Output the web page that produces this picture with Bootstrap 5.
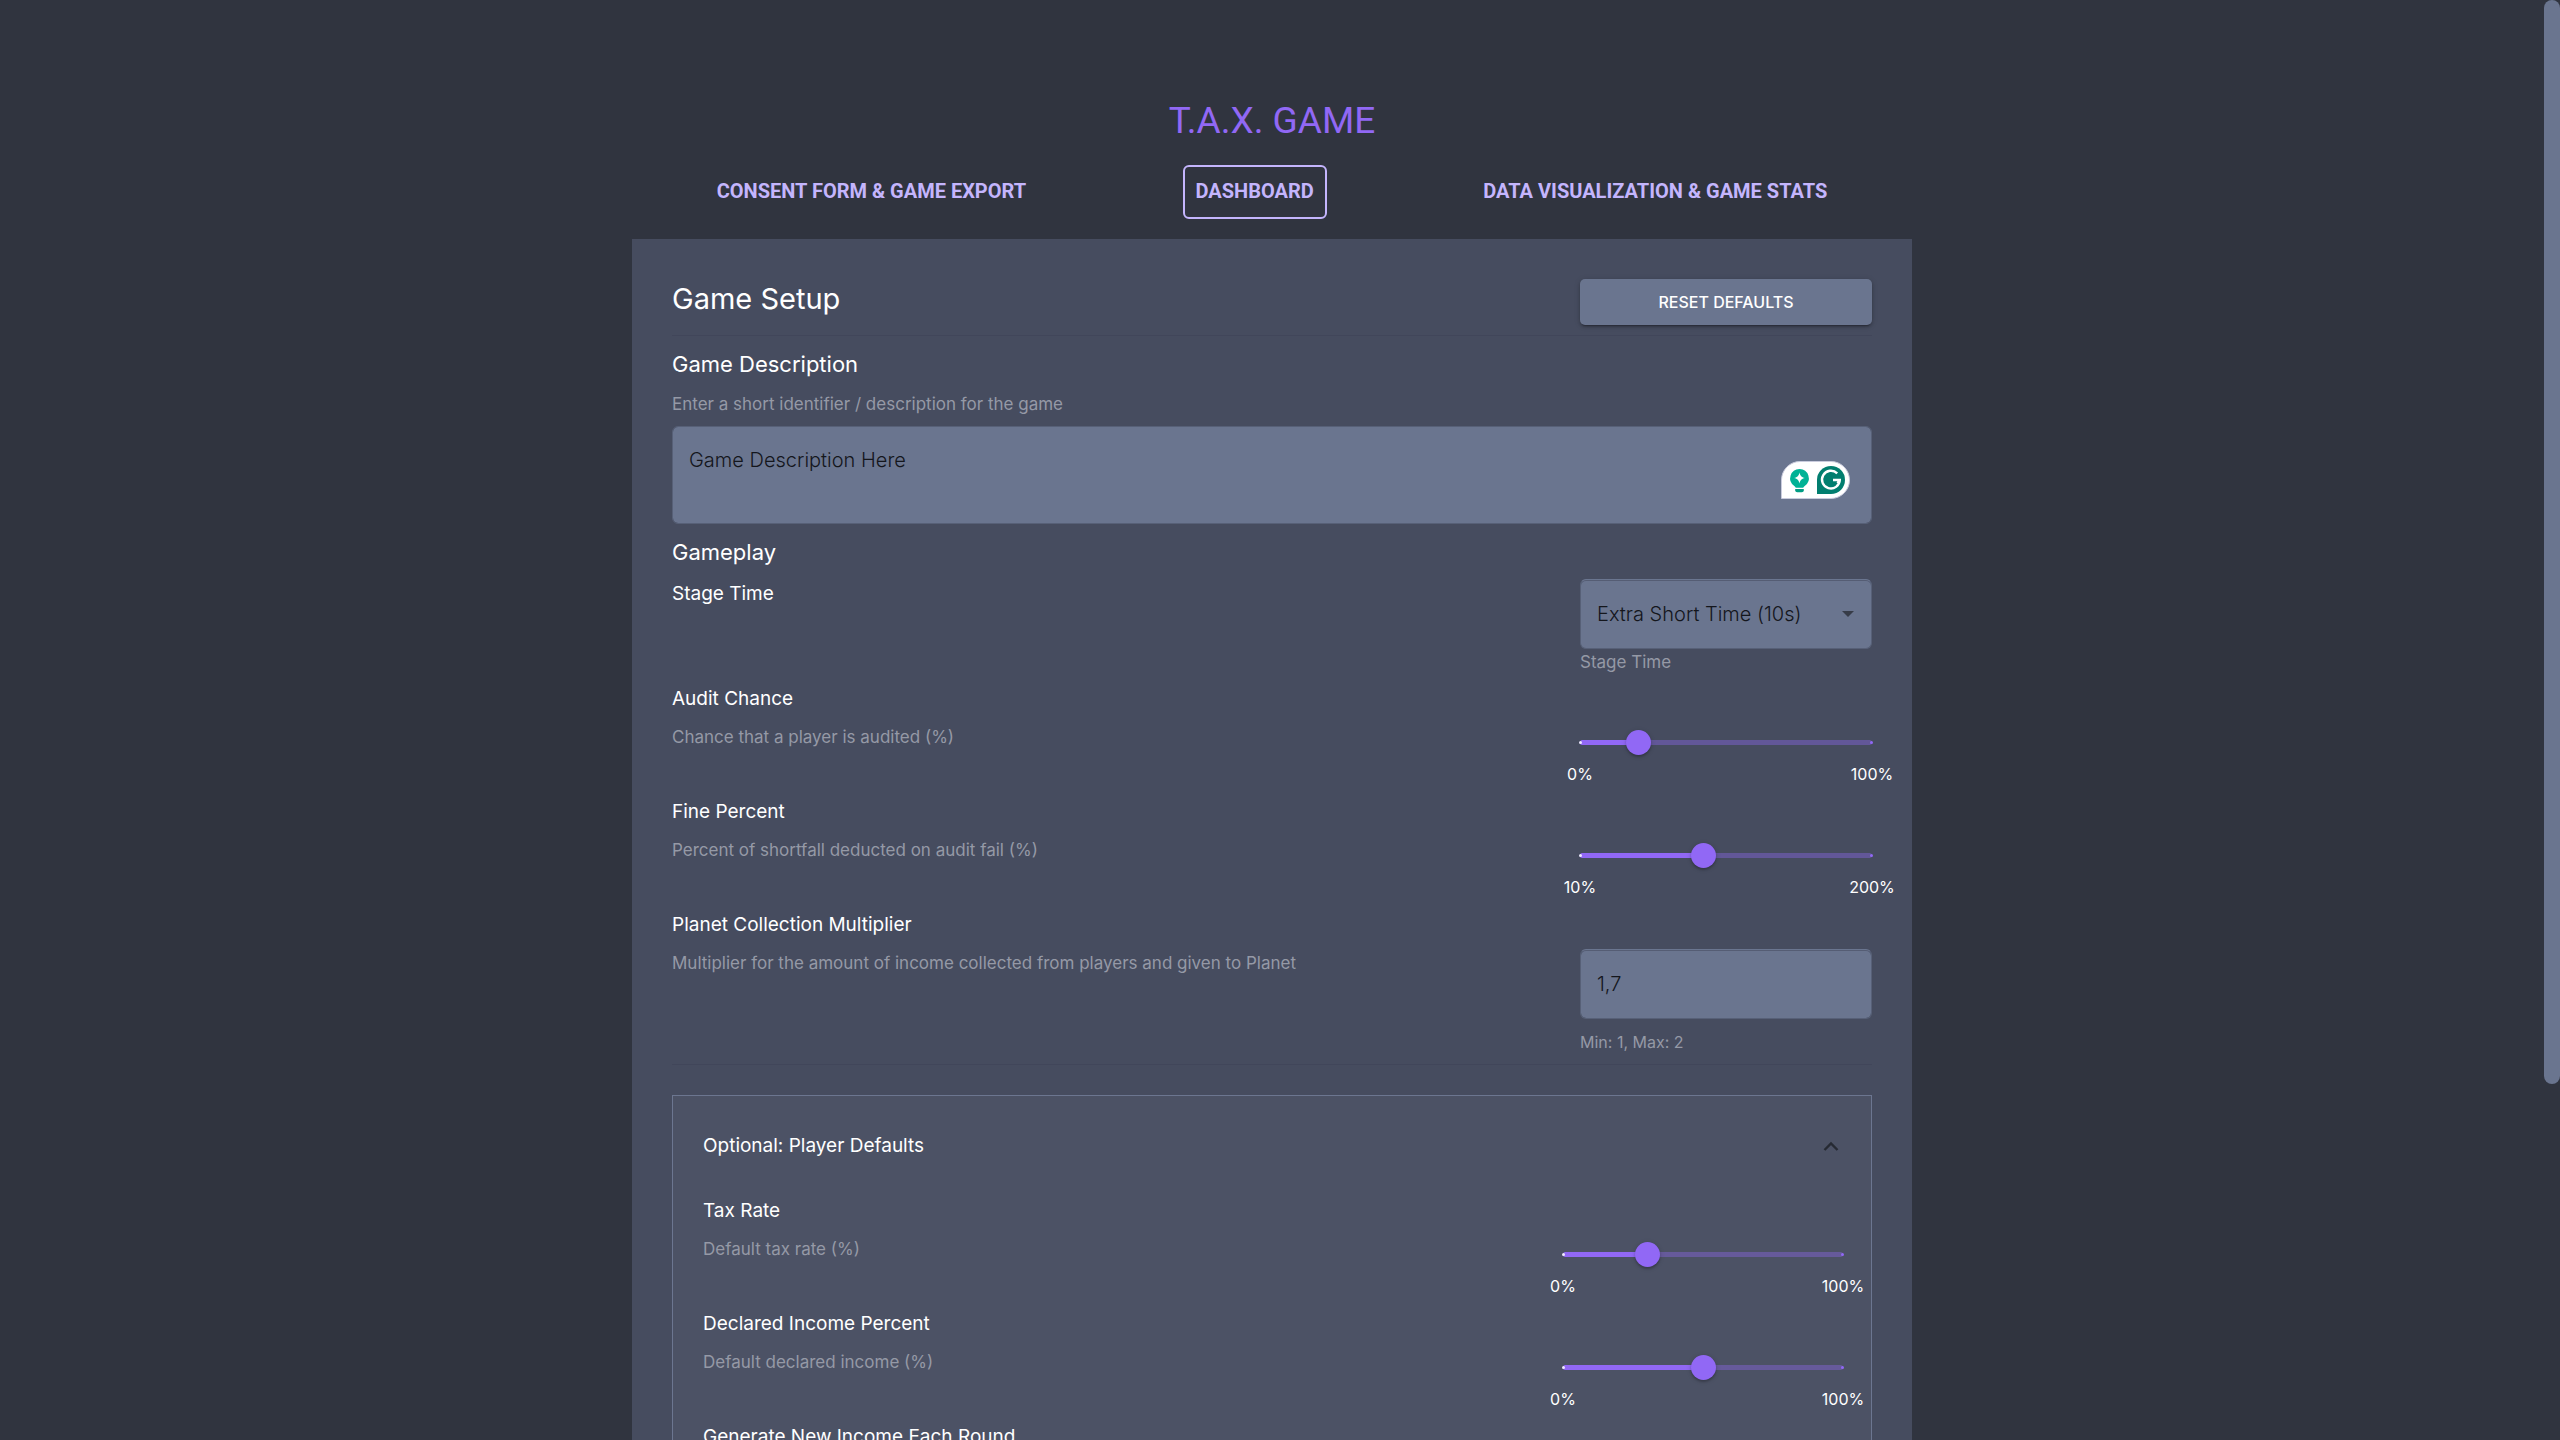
<!DOCTYPE html>
<html lang="en">
<head>
<meta charset="utf-8">
<meta name="viewport" content="width=device-width, initial-scale=1">
<title>T.A.X. Game</title>
<link href="https://cdn.jsdelivr.net/npm/bootstrap@5.3.0/dist/css/bootstrap.min.css" rel="stylesheet">
<style>
:root {
  --page: #30343f;
  --panel: #464c5f;
  --panel-inner: #4c5265;
  --field: #6a758f;
  --field-edge: #576077;
  --accent: #9168f5;
  --accent-light: #c4b5fd;
  --muted: #9599a6;
}
body { background: var(--page); color: #fff; font-family: Inter, "Noto Sans", sans-serif; }
.page-scroll { scrollbar-width: none; padding: 99px 16px 0 0; }
.page-wrap { max-width: 1280px; }
.site-title { font: 400 37px/44px Roboto, sans-serif; color: var(--accent); margin-bottom: 22px; }
.site-nav { font: 700 20px/30px Roboto, sans-serif; margin-bottom: 20px; }
.site-nav a { color: var(--accent-light); text-decoration: none; border: 2px solid transparent; border-radius: 6px; padding: 9px 11px 11px; }
.site-nav a.active { border-color: var(--accent-light); }

.setup-panel { background: var(--panel); padding: 40px; min-height: 1640px; }
.setup-head { border-bottom: 1px solid #41465a; padding-bottom: 10px; margin-bottom: 13px; }
.setup-head h1 { font-size: 29px; line-height: 40px; font-weight: 400; }
.control-col { flex: 0 0 292px; }
.btn-reset { --bs-btn-color: #fff; --bs-btn-bg: var(--field); --bs-btn-hover-bg: #5b6680; --bs-btn-hover-color: #fff;
  height: 46px; border: 0; border-radius: 5px; font-size: 16px; font-weight: 500;
  box-shadow: 0 3px 1px -2px rgba(0,0,0,.2), 0 2px 3px rgba(0,0,0,.2), 0 1px 6px rgba(0,0,0,.14); }

.group-title { font-size: 22px; line-height: 30px; font-weight: 400; margin-bottom: 12px; }
.setting-title { display: block; font-size: 19px; line-height: 30px; font-weight: 400; margin: 0; }
.setting-help { font-size: 17px; line-height: 26px; color: var(--muted); margin: 10px 0 0; }
.group-help { margin: 0 0 9px; }

.field { background-color: var(--field); border: 1px solid var(--field-edge); border-radius: 6px; color: #14161c;
  font-size: 20px; font-weight: 300; line-height: 30px; padding: 0 16px; }
.field:focus { background-color: var(--field); color: #14161c; border-color: var(--accent); box-shadow: none; }
textarea.field { height: 98px; padding: 18px 16px; resize: none; }
.field-tall { height: 70px; border-top-color: var(--field); box-shadow: inset 0 1px 0 #555d74; }
select.field { background-image: url("data:image/svg+xml,%3Csvg xmlns='http://www.w3.org/2000/svg' viewBox='0 0 12 6'%3E%3Cpath fill='%23373c48' d='M0 0h12L6 6z'/%3E%3C/svg%3E");
  background-size: 12px 6px; background-position: right 17px center; }
.desc-box { margin-bottom: 13px; }
.assist { position: absolute; right: 22px; bottom: 25px; width: 69px; height: 38px; }

.row-stage { min-height: 105px; }
.row-slider { min-height: 113px; }
.row-slider .control-col { padding-top: 45px; }
.row-multiplier { min-height: 155px; border-bottom: 1px solid #41465a; margin-bottom: 30px; }
.row-multiplier .control-col { padding-top: 39px; }
.limit-note { font-size: 16px; line-height: 24px; color: var(--muted); margin: 11px 0 0; }

.slide { position: relative; height: 26px; margin-bottom: 7px; }
.slide::before, .slide::after { content: ""; position: absolute; left: 0; top: 11px; height: 5px; border-radius: 3px; background: var(--accent); }
.slide::before { width: 100%; opacity: .38; }
.slide::after { width: var(--fill); }
.slide i { position: absolute; z-index: 1; top: 12px; width: 3px; height: 3px; border-radius: 50%; }
.slide i.lo { left: -1px; background: #efe9ff; }
.slide i.hi { right: -1px; background: var(--accent); }
.slide input { position: absolute; z-index: 2; left: -12px; width: calc(100% + 24px); height: 26px; padding: 0; margin: 0; }
.slide input::-webkit-slider-runnable-track { height: 26px; background: transparent; }
.slide input::-webkit-slider-thumb { width: 25px; height: 25px; margin-top: 1px; background: var(--accent);
  box-shadow: 0 2px 2px rgba(0,0,0,.16), 0 1px 5px rgba(0,0,0,.18); }
.ends { font-size: 16px; line-height: 24px; }
.ends span { width: 0; display: flex; justify-content: center; white-space: nowrap; }

.defaults { background: var(--panel-inner); border: 1px solid #6c7690; padding: 35px 28px 35px 30px; min-height: 720px; }
.defaults-toggle { background: none; border: 0; color: #fff; padding: 0; margin-bottom: 35px; }
.defaults .control-col { flex-basis: 280px; }
.scroll-thumb { position: fixed; top: 0; right: 0; width: 16px; height: 75.3vh; border-radius: 8px; background: var(--field); }
</style>
<script src="https://cdn.jsdelivr.net/npm/bootstrap@5.3.0/dist/js/bootstrap.bundle.min.js"></script>
</head>
<body>
<div class="page-scroll vh-100 overflow-auto">
  <div class="page-wrap mx-auto">
    <header>
      <div class="site-title text-center">T.A.X. GAME</div>
      <nav class="site-nav d-flex justify-content-around">
        <a href="#consent">CONSENT FORM &amp; GAME EXPORT</a>
        <a href="#dashboard" class="active" aria-current="page">DASHBOARD</a>
        <a href="#stats">DATA VISUALIZATION &amp; GAME STATS</a>
      </nav>
    </header>

    <main class="setup-panel">
      <div class="setup-head d-flex justify-content-between align-items-start">
        <h1 class="m-0">Game Setup</h1>
        <div class="control-col"><button type="button" class="btn btn-reset w-100">RESET DEFAULTS</button></div>
      </div>

      <label class="group-title d-block" for="description">Game Description</label>
      <p class="setting-help group-help">Enter a short identifier / description for the game</p>
      <div class="desc-box position-relative">
        <textarea id="description" class="form-control field" spellcheck="false">Game Description Here</textarea>
        <svg class="assist" viewBox="0 0 69 38" aria-hidden="true">
          <path d="M.5 37.5V19A18.5 18.5 0 0 1 19 .5h31a18.5 18.5 0 0 1 0 37z" fill="#fff" stroke="#c9cbdd"/>
          <path d="M18.500 8a9.300 9.300 0 0 0-5.200 17c.9.700 1.200 1.100 1.400 1.700h7.600c.2-.6.5-1 1.400-1.700A9.300 9.300 0 0 0 18.500 8z" fill="#00b295"/>
          <path d="M14.200 28h8.600v1.200a2 2 0 0 1-2 2h-4.600a2 2 0 0 1-2-2z" fill="#009d84"/>
          <path d="M18.500 11.500c.8 3.500 2 4.700 5.300 5.500-3.300.8-4.500 2-5.300 5.500-.8-3.500-2-4.700-5.300-5.500 3.300-.8 4.500-2 5.300-5.500z" fill="#fff"/>
          <path d="M36 33V19a14 14 0 1 1 14 14z" fill="#027e6f"/>
          <path d="M56.200 12.300A8.900 8.900 0 1 0 58.800 19H52m6.800 0-2.300 3.200" fill="none" stroke="#fff" stroke-width="2.400"/>
        </svg>
      </div>

      <h2 class="group-title">Gameplay</h2>

      <div class="row-stage d-flex justify-content-between">
        <label class="setting-title" for="stage">Stage Time</label>
        <div class="control-col">
          <select id="stage" class="form-select field field-tall"><option>Extra Short Time (10s)</option></select>
          <p class="setting-help m-0">Stage Time</p>
        </div>
      </div>

      <div class="row-slider d-flex justify-content-between">
        <div>
          <label class="setting-title" for="audit">Audit Chance</label>
          <p class="setting-help">Chance that a player is audited (%)</p>
        </div>
        <div class="control-col">
          <div class="slide" style="--fill:20%"><i class="lo"></i><i class="hi"></i><input id="audit" class="form-range" type="range" min="0" max="100" value="20"></div>
          <div class="ends d-flex justify-content-between"><span>0%</span><span>100%</span></div>
        </div>
      </div>

      <div class="row-slider d-flex justify-content-between">
        <div>
          <label class="setting-title" for="fine">Fine Percent</label>
          <p class="setting-help">Percent of shortfall deducted on audit fail (%)</p>
        </div>
        <div class="control-col">
          <div class="slide" style="--fill:42%"><i class="lo"></i><i class="hi"></i><input id="fine" class="form-range" type="range" min="10" max="200" value="90"></div>
          <div class="ends d-flex justify-content-between"><span>10%</span><span>200%</span></div>
        </div>
      </div>

      <div class="row-multiplier d-flex justify-content-between">
        <div>
          <label class="setting-title" for="multiplier">Planet Collection Multiplier</label>
          <p class="setting-help">Multiplier for the amount of income collected from players and given to Planet</p>
        </div>
        <div class="control-col">
          <input id="multiplier" class="form-control field field-tall" type="text" inputmode="decimal" value="1,7">
          <p class="limit-note">Min: 1, Max: 2</p>
        </div>
      </div>

      <section class="defaults">
        <button type="button" class="defaults-toggle d-flex justify-content-between align-items-center w-100" aria-expanded="true">
          <span class="setting-title">Optional: Player Defaults</span>
          <svg width="24" height="24" viewBox="0 0 24 24" aria-hidden="true"><path d="M5.500 16 12 9.500 18.500 16" fill="none" stroke="#262a33" stroke-width="2.400"/></svg>
        </button>

        <div class="row-slider d-flex justify-content-between">
          <div>
            <label class="setting-title" for="tax">Tax Rate</label>
            <p class="setting-help">Default tax rate (%)</p>
          </div>
          <div class="control-col">
            <div class="slide" style="--fill:30%"><i class="lo"></i><i class="hi"></i><input id="tax" class="form-range" type="range" min="0" max="100" value="30"></div>
            <div class="ends d-flex justify-content-between"><span>0%</span><span>100%</span></div>
          </div>
        </div>

        <div class="row-slider d-flex justify-content-between">
          <div>
            <label class="setting-title" for="declared">Declared Income Percent</label>
            <p class="setting-help">Default declared income (%)</p>
          </div>
          <div class="control-col">
            <div class="slide" style="--fill:50%"><i class="lo"></i><i class="hi"></i><input id="declared" class="form-range" type="range" min="0" max="100" value="50"></div>
            <div class="ends d-flex justify-content-between"><span>0%</span><span>100%</span></div>
          </div>
        </div>

        <h3 class="setting-title">Generate New Income Each Round</h3>
      </section>
    </main>
  </div>
</div>
<div class="scroll-thumb" aria-hidden="true"></div>
</body>
</html>
